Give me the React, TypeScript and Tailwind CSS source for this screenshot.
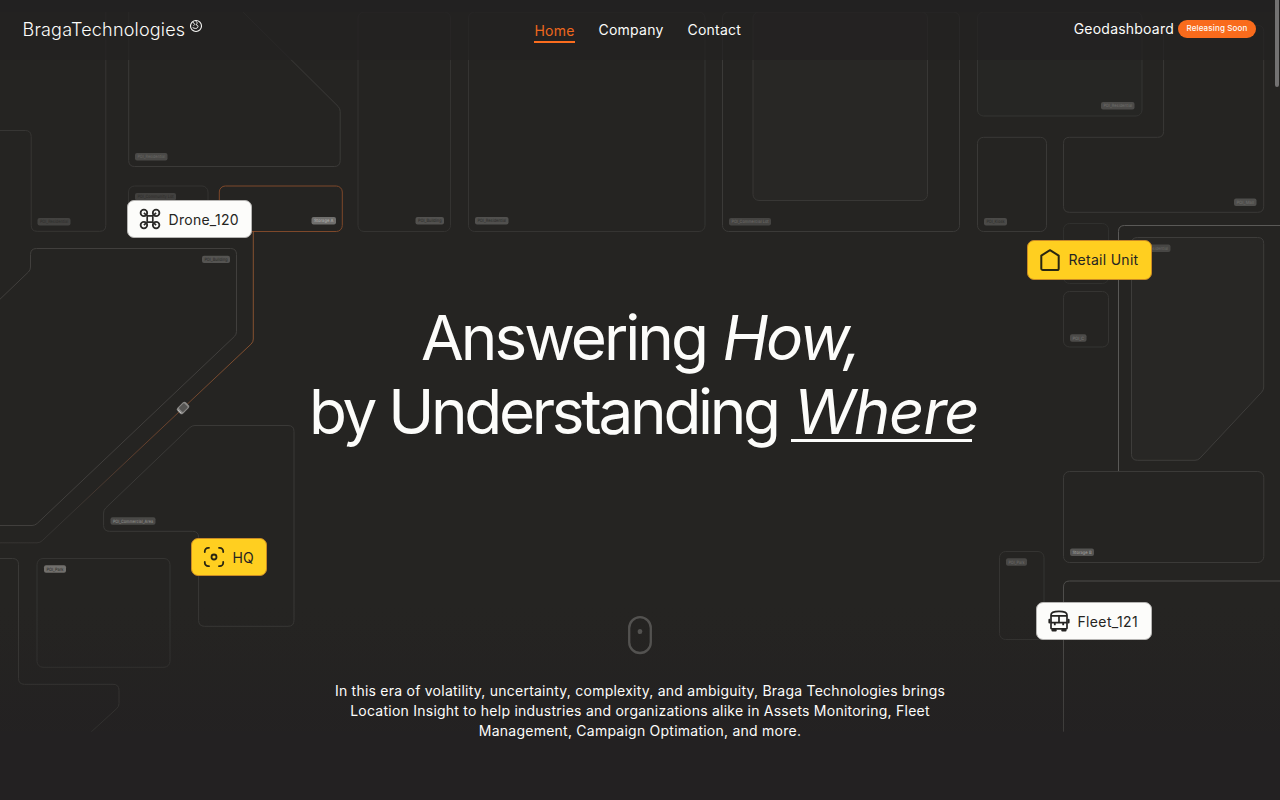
import React from "react";

type Point = [number, number];

/** Builds a path through the points, rounding every inner corner. */
function rounded(points: Point[], closed = false, r = 6): string {
  const n = points.length;
  const toward = (a: Point, b: Point, cut: number): Point => {
    const d = Math.hypot(b[0] - a[0], b[1] - a[1]);
    const t = Math.min(cut, d / 2) / d;
    return [a[0] + (b[0] - a[0]) * t, a[1] + (b[1] - a[1]) * t];
  };
  let d = "";
  for (let i = 0; i < n; i++) {
    const p = points[i];
    if (!closed && (i === 0 || i === n - 1)) {
      d += `${i ? "L" : "M"}${p[0]} ${p[1]}`;
      continue;
    }
    const prev = points[(i + n - 1) % n];
    const next = points[(i + 1) % n];
    const slanted = (prev[0] !== p[0] && prev[1] !== p[1]) || (next[0] !== p[0] && next[1] !== p[1]);
    const cut = slanted ? r * 0.5 : r;
    const a = toward(p, prev, cut);
    const b = toward(p, next, cut);
    d += `${i ? "L" : "M"}${a[0]} ${a[1]}Q${p[0]} ${p[1]} ${b[0]} ${b[1]}`;
  }
  return closed ? d + "Z" : d;
}

/** x, y, width, height, stroke, fill */
const blocks: [number, number, number, number, string, string][] = [
  [128.5, 186, 79.5, 45, "#343331", "none"],
  [358, 12, 92.5, 219.5, "#343331", "none"],
  [468.5, 12, 236.5, 219.5, "#353432", "none"],
  [722.5, 12, 237, 219.5, "#3b3a38", "none"],
  [753, 12, 174.5, 188.5, "#383735", "#282725"],
  [977.5, 12, 164.5, 104, "#343432", "#262624"],
  [977.5, 137.3, 69, 94.2, "#3a3937", "none"],
  [1063.5, 223.5, 45, 60, "#30302e", "none"],
  [1063.5, 291.5, 45, 55.5, "#353432", "none"],
  [1063.5, 471.5, 200.3, 91, "#3b3a38", "none"],
  [999.5, 551.5, 44.5, 88, "#353432", "none"],
  [37, 558.5, 133, 108.8, "#353432", "none"],
];

const shapes: { points: Point[]; closed?: boolean; stroke: string; fill?: string }[] = [
  { points: [[-5, 130.5], [31.2, 130.5], [31.2, 231.3], [105.8, 231.3], [105.8, 5]], stroke: "#373634" },
  { points: [[128.7, 5], [128.7, 166.5], [340.2, 166.5], [340.2, 108.5], [240, 9]], stroke: "#3b3a38" },
  { points: [[-5, 304], [30.5, 270], [30.5, 248.5], [236.5, 248.5], [236.5, 334.5], [35, 525.5], [-5, 525.5]], stroke: "#413f3d" },
  { points: [[192, 425.5], [294, 425.5], [294, 626.3], [198.6, 626.3], [198.6, 531.3], [103.6, 531.3], [103.6, 510]], closed: true, stroke: "#3a3937" },
  { points: [[-5, 558.5], [18.5, 558.5], [18.5, 684.3], [119, 684.3], [119, 706.5], [90, 733]], stroke: "#3a3937" },
  { points: [[1163.6, 25.5], [1263.7, 25.5], [1263.7, 212.3], [1063.5, 212.3], [1063.5, 137.3], [1163.6, 137.3]], closed: true, stroke: "#3a3937" },
  { points: [[1131.5, 237.5], [1263.7, 237.5], [1263.7, 390], [1198, 460.3], [1131.5, 460.3]], closed: true, stroke: "#3e3d3b", fill: "#282725" },
  { points: [[1118.5, 471], [1118.5, 225.5], [1285, 225.5]], stroke: "#5a5957" },
  { points: [[1063.5, 732], [1063.5, 581], [1285, 581]], stroke: "#4e4d4b" },
];

/** x, y, width, text, pill colour, text colour */
const tags: [number, number, number, string, string, string][] = [
  [135, 153, 32.5, "POI_Residential", "#4a4947", "#656461"],
  [37.5, 218, 33, "POI_Residential", "#434240", "#30302e"],
  [135, 193, 41, "POI_Community Lot", "#42413f", "#302f2d"],
  [311.5, 217, 24.5, "Storage A", "#706f6d", "#aaa9a7"],
  [415.5, 217, 28.5, "POI_Building", "#52514f", "#30302e"],
  [475, 217, 33.5, "POI_Residential", "#51504e", "#30302e"],
  [729, 218, 42, "POI_Commercial Lot", "#454442", "#686765"],
  [984, 218, 23, "POI_Kiosk", "#4b4a48", "#30302e"],
  [1101, 102, 33.5, "POI_Residential", "#4c4b49", "#6b6a68"],
  [1234, 198.5, 22.5, "POI_Mall", "#4f4e4c", "#6c6b69"],
  [1137, 244.5, 33.5, "POI_Residential", "#474644", "#656461"],
  [202, 255.7, 28, "POI_Building", "#555452", "#30302e"],
  [110.5, 517.3, 45, "POI_Commercial_Area", "#4a4947", "#8a8987"],
  [44, 565.3, 22, "POI_Park", "#716f6c", "#343331"],
  [1070, 334.3, 16.5, "POI_C", "#4c4b49", "#737270"],
  [1070, 548.5, 24, "Storage B", "#555452", "#9b9a98"],
  [1006, 558.3, 21, "POI_Park", "#484745", "#686765"],
];

function CityMap() {
  return (
    <svg className="absolute inset-0" width="1280" height="800" viewBox="0 0 1280 800" aria-hidden="true">
      <defs>
        <linearGradient id="route" x1="253" y1="330" x2="75" y2="515" gradientUnits="userSpaceOnUse">
          <stop offset="0" stopColor="#84502f" />
          <stop offset="0.6" stopColor="#653f2b" />
          <stop offset="1" stopColor="#353331" />
        </linearGradient>
        <linearGradient id="ground" x1="0" y1="620" x2="0" y2="735" gradientUnits="userSpaceOnUse">
          <stop offset="0" stopColor="#252422" />
          <stop offset="1" stopColor="#232122" />
        </linearGradient>
        <linearGradient id="fade" x1="0" y1="600" x2="0" y2="731" gradientUnits="userSpaceOnUse">
          <stop offset="0" stopColor="#242221" stopOpacity="0" />
          <stop offset="1" stopColor="#242221" stopOpacity="0.4" />
        </linearGradient>
        <clipPath id="mapArea">
          <rect x="0" y="12" width="1280" height="719.5" />
        </clipPath>
      </defs>
      <g clipPath="url(#mapArea)">
        <rect y="12" width="1280" height="720" fill="url(#ground)" />
        {blocks.map(([x, y, w, h, stroke, fill], i) => (
          <rect key={i} x={x} y={y} width={w} height={h} rx="6" fill={fill} stroke={stroke} />
        ))}
        {shapes.map((s, i) => (
          <path key={i} d={rounded(s.points, s.closed)} stroke={s.stroke} fill={s.fill ?? "none"} />
        ))}
        <rect x="219.3" y="186" width="123" height="45.5" rx="6" fill="none" stroke="#7e482a" />
        <path d={rounded([[253.3, 231], [253.3, 342], [40, 542.8], [-5, 542.8]])} fill="none" stroke="url(#route)" />
        <g transform="translate(183 408) rotate(-45)">
          <rect x="-6" y="-4" width="12" height="8" rx="2" fill="#8b8a88" />
          <rect x="-3.2" y="-3" width="7.4" height="6" rx="1.2" fill="#555452" />
          <path d="M-5 -2.4v4.8" stroke="#c4c3c1" strokeWidth="0.9" />
        </g>
        {tags.map(([x, y, w, text, bg, fg], i) => (
          <g key={i}>
            <rect x={x} y={y} width={w} height="7.4" rx="2" fill={bg} />
            <text
              x={x + 2.4}
              y={y + 5.3}
              textLength={w - 4.8}
              lengthAdjust="spacingAndGlyphs"
              fill={fg}
              textRendering="geometricPrecision"
              className="font-['Inter',sans-serif] text-[4.4px] font-medium"
            >
              {text}
            </text>
          </g>
        ))}
        <rect y="600" width="1280" height="140" fill="url(#fade)" />
      </g>
    </svg>
  );
}

function DroneIcon() {
  return (
    <svg width="22" height="22" viewBox="0 0 22 22" fill="none" stroke="#2b2a28" strokeWidth="1.8">
      <circle cx="4.9" cy="4.9" r="3.3" />
      <circle cx="17.1" cy="4.9" r="3.3" />
      <circle cx="4.9" cy="17.1" r="3.3" />
      <circle cx="17.1" cy="17.1" r="3.3" />
      <path
        d="M4.9 4.9 8.200 7.800h5.600L17.100 4.900M4.900 17.100l3.300-2.900h5.600l3.300 2.900M8.200 7.800v6.400M13.800 7.800v6.400"
        strokeWidth="1.7"
        strokeLinejoin="round"
      />
    </svg>
  );
}

function UnitIcon() {
  return (
    <svg width="22" height="24" viewBox="0 0 22 24" fill="none" stroke="#292611" strokeWidth="2" strokeLinejoin="round">
      <path d="M2.300 7.600 11 2.200l8.700 5.400v12.900a1.600 1.600 0 0 1-1.600 1.600H3.900a1.600 1.600 0 0 1-1.600-1.600z" />
    </svg>
  );
}

function FocusIcon() {
  return (
    <svg width="22" height="22" viewBox="0 0 22 22" fill="none" stroke="#292611" strokeWidth="1.8" strokeLinecap="round">
      <path d="M1.800 6V5.200A3.400 3.400 0 0 1 5.200 1.800H6M16 1.800h.8A3.400 3.400 0 0 1 20.200 5.200V6M20.200 16v.8a3.400 3.400 0 0 1-3.400 3.400H16M6 20.200h-.8A3.400 3.400 0 0 1 1.800 16.800V16" />
      <circle cx="11" cy="11" r="2.5" />
    </svg>
  );
}

function BusIcon() {
  return (
    <svg width="22" height="22" viewBox="0 0 22 22" fill="none" stroke="#242321" strokeWidth="1.7">
      <path d="M3 18V5c0-2.400 2.500-3.600 8-3.600S19 2.600 19 5v13a.8.8 0 0 1-.8.8H3.800A.8.8 0 0 1 3 18z" />
      <path d="M3 5.800h16M3 12.700h16M11 5.800v6.900" />
      <path d="M1.400 9.800v2.600M20.600 9.800v2.600" strokeWidth="2" strokeLinecap="round" />
      <path d="M6.800 13v2.300M15.200 13v2.300" strokeWidth="1.8" />
      <path d="M4.600 20.300h3M14.400 20.300h3" strokeWidth="2.400" strokeLinecap="round" />
    </svg>
  );
}

function Pin({ place, icon, children }: { place: string; icon: React.ReactNode; children: React.ReactNode }) {
  return (
    <div className={`absolute flex items-center rounded-[7px] border pl-[11px] text-sm text-[#252422] ${place}`}>
      {icon}
      <span className="ml-[7.5px] whitespace-nowrap">{children}</span>
    </div>
  );
}

function Header() {
  return (
    <header className="absolute inset-x-0 top-0 flex h-[60px] items-start bg-[#232122]/75 px-[22px] text-sm text-[#fcfcfa]">
      <a href="#" className="flex flex-1 items-start pt-[16px] pl-[0.5px]">
        <span className="text-[18px] leading-[27px] font-light tracking-[0.19px]">BragaTechnologies</span>
        <svg className="mt-[3px] ml-[4px]" width="14" height="14" viewBox="0 0 14 14" fill="none" stroke="#fcfcfa">
          <circle cx="7" cy="7" r="5.5" strokeWidth="1.1" />
          <path
            d="M3.800 3 5.800 5.400 4.600 6.700M6.600 2C8.800 3.200 8.200 4.700 7.100 5.800 8.600 6 9.400 7 8.700 8.400 7.800 9.900 5.600 9.600 3.600 8.600"
            strokeWidth="0.95"
          />
        </svg>
      </a>
      <nav className="mr-[3px] flex gap-6 pt-5 leading-5 tracking-[0.23px]">
        <a href="#" className="mt-px h-[22px] border-b-2 border-[#fb6d1e] text-[#ee671d]">Home</a>
        <a href="#">Company</a>
        <a href="#">Contact</a>
      </nav>
      <div className="flex flex-1 items-start justify-end gap-1 pt-[19px] pr-[2px]">
        <span className="leading-5 tracking-[0.22px]">Geodashboard</span>
        <span className="mt-px flex h-[18px] w-[78px] items-center justify-center rounded-full bg-[#f96b1c] text-[8px] font-medium tracking-[0.15px]">
          Releasing Soon
        </span>
      </div>
    </header>
  );
}

export default function App() {
  return (
    <div className="relative h-[800px] w-[1280px] overflow-hidden bg-[#232122] font-['Inter',sans-serif]">
      <CityMap />
      <main className="relative flex flex-col items-center pt-[301px] text-[#fcfcfa]">
        <h1 className="flex flex-col items-center text-[62px] leading-[74px] whitespace-nowrap">
          <span className="tracking-[-3px]">
            Answering <em className="ml-[2px] tracking-[-2.4px]">How,</em>
          </span>
          <span className="pl-[1px] tracking-[-3.3px]">
            by Understanding{" "}
            <em className="relative -ml-px inline-block w-[181px] indent-[3px] tracking-[-1.4px] after:absolute after:inset-x-0 after:bottom-[7px] after:h-[3px] after:bg-[#fcfcfa]">
              Where
            </em>
          </span>
        </h1>
        <svg className="mt-[166px]" width="26" height="40" viewBox="0 0 26 40" fill="none">
          <rect x="2.2" y="2.2" width="21.6" height="35.8" rx="10.8" stroke="#535250" strokeWidth="2.3" />
          <ellipse cx="13" cy="16.5" rx="2.3" ry="2.6" fill="#535250" />
        </svg>
        <p className="mt-[26px] text-center text-sm leading-5 tracking-[0.24px] whitespace-nowrap">
          In this era of volatility, uncertainty, complexity, and ambiguity, Braga Technologies brings
          <br />
          Location Insight to help industries and organizations alike in Assets Monitoring, Fleet
          <br />
          Management, Campaign Optimation, and more.
        </p>
      </main>
      <Pin icon={<DroneIcon />} place="left-[127px] top-[200px] h-[38px] w-[125px] border-[#b5b4b2] bg-[#fcfcfa] tracking-[0.28px] [&>span]:mt-[2px]">
        Drone_120
      </Pin>
      <Pin icon={<UnitIcon />} place="left-[1027px] top-[240px] h-[40px] w-[125px] border-[#c98a24] bg-[#ffcf20] tracking-[0.28px]">
        Retail Unit
      </Pin>
      <Pin icon={<FocusIcon />} place="left-[191px] top-[538px] h-[38px] w-[76px] border-[#c98a24] bg-[#ffcf20] tracking-[0.1px] [&>span]:mt-[2px]">
        HQ
      </Pin>
      <Pin icon={<BusIcon />} place="left-[1036px] top-[602px] h-[38px] w-[116px] border-[#b5b4b2] bg-[#fcfcfa] tracking-[0.35px] [&>span]:mt-[2px]">
        Fleet_121
      </Pin>
      <Header />
      <div className="absolute top-0 right-[1px] h-[87px] w-[4px] rounded-b-full bg-[#737272]" />
    </div>
  );
}
